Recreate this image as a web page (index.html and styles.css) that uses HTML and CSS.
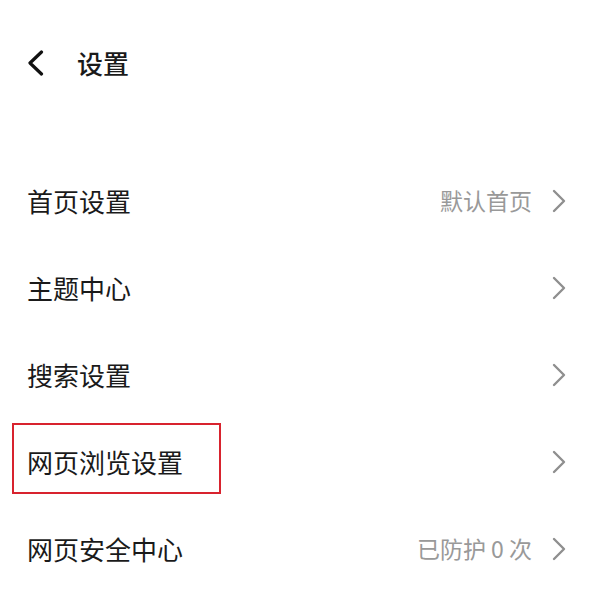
FILE: index.html
```html
<!DOCTYPE html>
<html lang="zh-CN">

<head>
    <meta charset="UTF-8">
    <meta name="viewport" content="width=device-width, initial-scale=1.0">
    <title>设置</title>
    <link rel="stylesheet" href="styles.css">
</head>

<body>
    <div class="page">
        <div class="header">
            <svg class="back" width="17" height="26" viewBox="0 0 17 26">
                <path d="M14.5 2 L3 13 L14.5 24" fill="none" stroke="#111" stroke-width="3.2" stroke-linecap="round" stroke-linejoin="round"/>
            </svg>
            <h1>设置</h1>
        </div>

        <div class="list">
            <div class="row">
                <span class="label">首页设置</span>
                <span class="value">默认首页</span>
                <svg class="arrow" width="14" height="24" viewBox="0 0 14 24">
                    <path d="M2 2 L12 12 L2 22" fill="none" stroke="#8f8f8f" stroke-width="2.4" stroke-linecap="round" stroke-linejoin="round"/>
                </svg>
            </div>

            <div class="row">
                <span class="label">主题中心</span>
                <svg class="arrow" width="14" height="24" viewBox="0 0 14 24">
                    <path d="M2 2 L12 12 L2 22" fill="none" stroke="#8f8f8f" stroke-width="2.4" stroke-linecap="round" stroke-linejoin="round"/>
                </svg>
            </div>

            <div class="row">
                <span class="label">搜索设置</span>
                <svg class="arrow" width="14" height="24" viewBox="0 0 14 24">
                    <path d="M2 2 L12 12 L2 22" fill="none" stroke="#8f8f8f" stroke-width="2.4" stroke-linecap="round" stroke-linejoin="round"/>
                </svg>
            </div>

            <div class="row">
                <span class="label">网页浏览设置</span>
                <svg class="arrow" width="14" height="24" viewBox="0 0 14 24">
                    <path d="M2 2 L12 12 L2 22" fill="none" stroke="#8f8f8f" stroke-width="2.4" stroke-linecap="round" stroke-linejoin="round"/>
                </svg>
                <div class="mark"></div>
            </div>

            <div class="row">
                <span class="label">网页安全中心</span>
                <span class="value">已防护 0 次</span>
                <svg class="arrow" width="14" height="24" viewBox="0 0 14 24">
                    <path d="M2 2 L12 12 L2 22" fill="none" stroke="#8f8f8f" stroke-width="2.4" stroke-linecap="round" stroke-linejoin="round"/>
                </svg>
            </div>
        </div>
    </div>
</body>

</html>
```

FILE: styles.css
```css
* {
    margin: 0;
    padding: 0;
    box-sizing: border-box;
}

body {
    font-family: "Noto Sans CJK SC", "Noto Sans", sans-serif;
    background: #fff;
    color: #1a1a1a;
}

.page {
    width: 600px;
    height: 608px;
    overflow: hidden;
}

.header {
    height: 126px;
    display: flex;
    align-items: center;
    padding-left: 27px;
}

.header h1 {
    font-size: 26px;
    font-weight: 500;
    margin-left: 33px;
    line-height: 1;
}

.list {
    margin-top: 31px;
}

.row {
    position: relative;
    height: 87px;
    display: flex;
    align-items: center;
    padding: 0 34px 0 27px;
}

.label {
    flex: 1;
    font-size: 26px;
    line-height: 1;
}

.value {
    font-size: 23px;
    color: #999;
    margin-right: 20px;
    line-height: 1;
}

.arrow {
    display: block;
}

.mark {
    position: absolute;
    left: 12px;
    top: 5px;
    width: 209px;
    height: 71px;
    border: 2px solid #d8232e;
}
```
